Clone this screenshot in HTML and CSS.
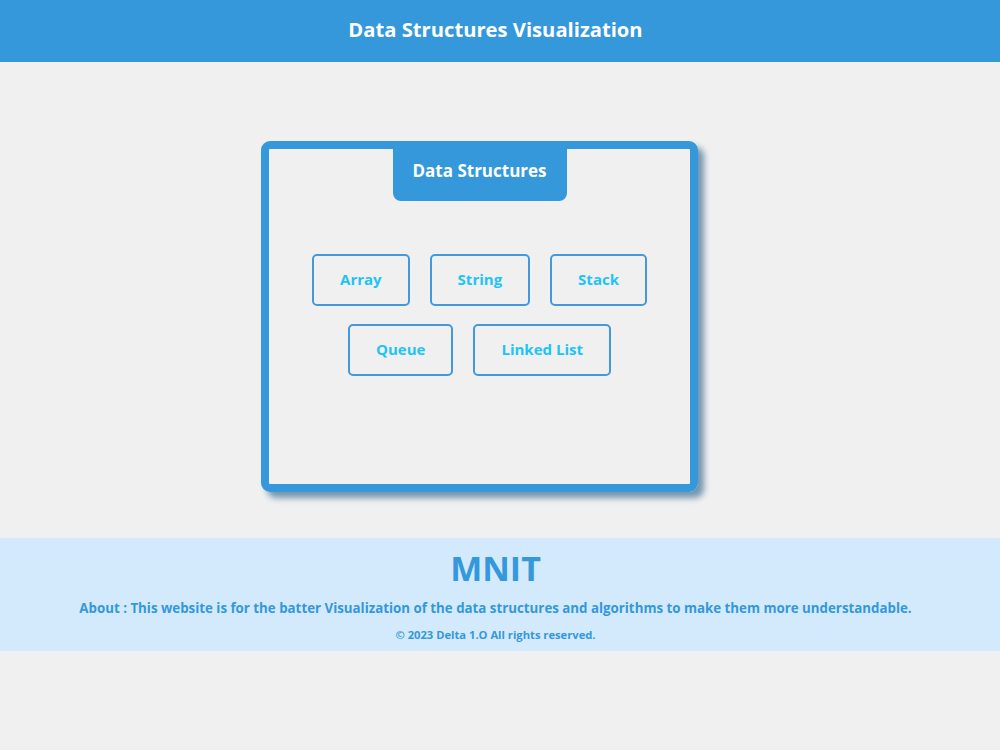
FILE: index.html
```html
<!DOCTYPE html>
<html>
<head>
<meta charset="utf-8">
<link rel="stylesheet" href="styles.css">
</head>
<body>
<header class="top">
  <h1 class="top-title">Data Structures Visualization</h1>
</header>
<main class="main">
  <section class="card">
    <div class="tab">Data Structures</div>
    <div class="buttons">
      <div class="row">
        <button class="ds-btn">Array</button>
        <button class="ds-btn">String</button>
        <button class="ds-btn">Stack</button>
      </div>
      <div class="row">
        <button class="ds-btn">Queue</button>
        <button class="ds-btn">Linked List</button>
      </div>
    </div>
  </section>
</main>
<footer class="foot">
  <div class="brand">MNIT</div>
  <p class="about">About : This website is for the batter Visualization of the data structures and algorithms to make them more understandable.</p>
  <p class="copy">© 2023 Delta 1.O All rights reserved.</p>
</footer>
</body>
</html>
```
FILE: styles.css
```css
* { box-sizing: border-box; }
body {
  margin: 0;
  background: #f0f0f0;
  font-family: "Open Sans", "Noto Sans", sans-serif;
  font-weight: 700;
}
.top {
  height: 62px;
  background: #3498db;
  display: flex;
  align-items: center;
  justify-content: center;
  padding-right: 9px;
}
.top-title {
  margin: 0 0 4px 0;
  color: #fff;
  font-size: 20.2px;
  font-weight: 700;
}
.main {
  padding: 79px 0 0 261px;
  height: 476px;
}
.card {
  width: 437px;
  height: 351px;
  border: 8px solid #3498db;
  border-radius: 9px;
  box-shadow: 6px 6px 6px #7595ad;
  display: flex;
  flex-direction: column;
  align-items: center;
}
.tab {
  width: 174px;
  height: 52px;
  background: #3498db;
  color: #fff;
  font-size: 17px;
  border-radius: 0 0 8px 8px;
  display: flex;
  justify-content: center;
  padding-top: 10px;
}
.buttons {
  margin-top: 53px;
  display: flex;
  flex-direction: column;
  gap: 18px;
}
.row {
  display: flex;
  justify-content: center;
  gap: 20px;
}
.ds-btn {
  height: 52px;
  padding: 0 26px 2px;
  background: transparent;
  border: 2px solid #4499dc;
  border-radius: 5px;
  color: #1ec4f4;
  font-family: inherit;
  font-weight: 700;
  font-size: 15px;
}
.foot {
  height: 113px;
  background: #d3eafc;
  text-align: center;
  color: #3498db;
  padding: 8px 9px 0 0;
}
.brand {
  font-size: 34px;
  line-height: 44px;
}
.about {
  margin: 8px 0 0 0;
  font-size: 13.3px;
  line-height: 20px;
}
.copy {
  margin: 10px 0 0 0;
  font-size: 11.2px;
  line-height: 14px;
}
```
